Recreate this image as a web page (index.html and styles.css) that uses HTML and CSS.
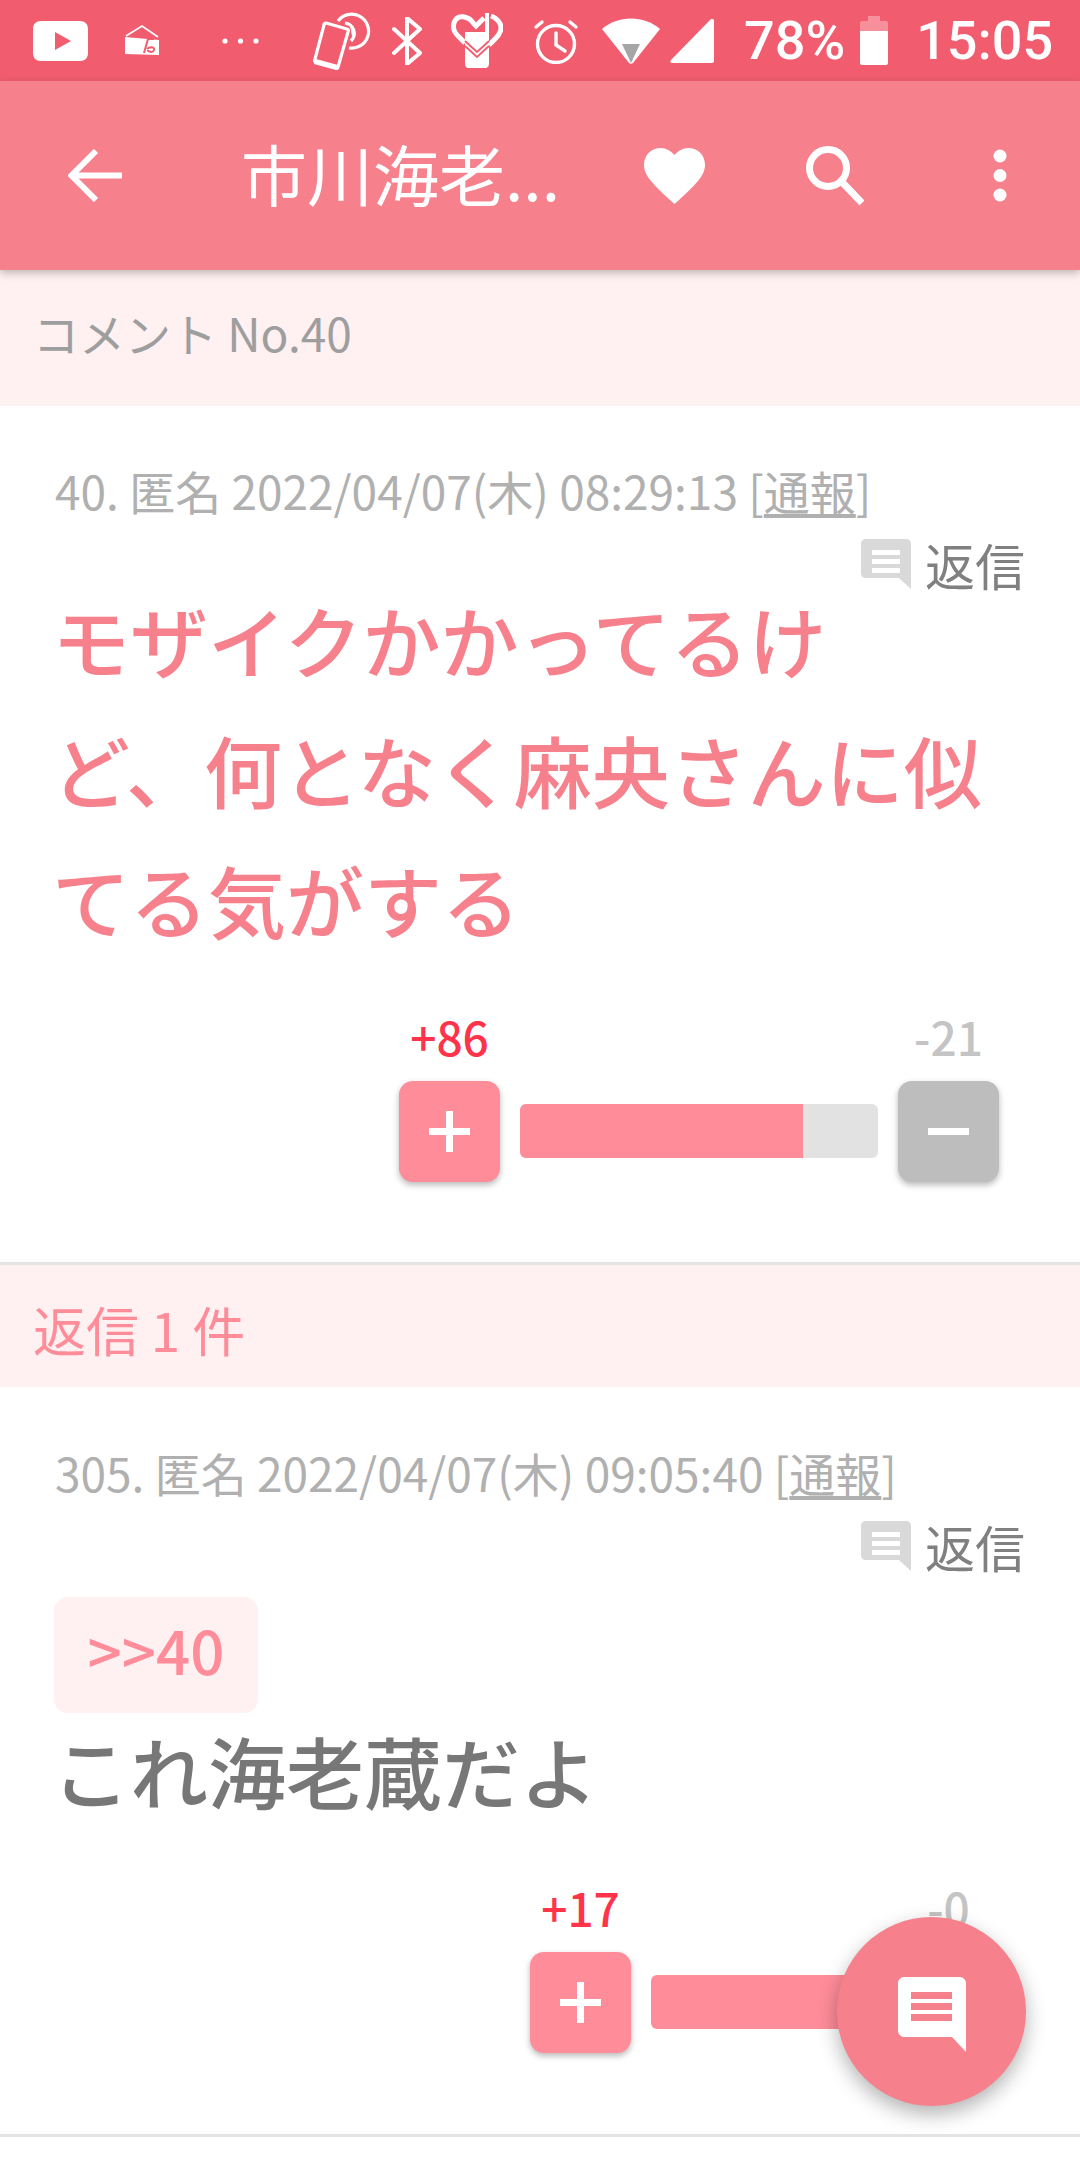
FILE: index.html
```html
<!DOCTYPE html>
<html lang="ja">
<head>
    <meta charset="UTF-8">
    <meta name="viewport" content="width=device-width, initial-scale=1.0">
    <title>コメント No.40</title>
    <link rel="stylesheet" href="styles.css">
</head>
<body>
    <div class="screen">
        <div class="status-bar">
            <svg class="st-youtube" viewBox="0 0 55 40"><path fill="#fff" fill-rule="evenodd" d="M8 0h39c5 0 8 3 8 8v24c0 5-3 8-8 8H8c-5 0-8-3-8-8V8c0-5 3-8 8-8zm14 11v18l16-9z"/></svg>
            <svg class="st-mail" viewBox="0 0 34 32"><path fill="none" stroke="#fff" stroke-width="1.6" d="M1 11 17 1l16 11"/><path fill="#fff" d="M0 12l34 3v15l-34-1z"/><path fill="none" stroke="#f15d6e" stroke-width="2" d="M19 28l4-14h6M22 24c3-3 8-2 7 1s-6 2-6 0"/></svg>
            <svg class="st-dots" viewBox="0 0 37 8"><circle cx="3" cy="4" r="2.6" fill="#fff"/><circle cx="18.500" cy="4" r="2.600" fill="#fff"/><circle cx="34" cy="4" r="2.600" fill="#fff"/></svg>
            <svg class="st-nfc" viewBox="0 0 59 58"><g fill="none" stroke="#fff" stroke-width="3.200"><path stroke-linejoin="round" d="M13 11l21 6c1 0 2 1 1 3L25 55c0 1-1 2-2 1L3 50c-1 0-2-1-1-3L11 13c0-2 1-2 2-2z"/><path d="M25 9A17 17 0 1 1 36 36"/><path d="M32 11A10.500 10.500 0 0 1 38 29"/></g><path fill="#fff" d="M37 13a6 6 0 0 1 2 11z"/><path fill="#fff" d="M3 47l22 6-2 5L1 52z"/></svg>
            <svg class="st-bt" viewBox="0 0 30 48"><path fill="none" stroke="#fff" stroke-width="4" stroke-linecap="round" stroke-linejoin="round" d="M2 12l26 24-13 11V1l13 11L2 36"/></svg>
            <svg class="st-heart" viewBox="0 0 52 55"><g fill="none" stroke="#fff" stroke-width="5"><path d="M33 5 25 13l-2-2C18 3 6 0 3 10c-2 7 2 11 5 14l6 6"/><path d="M40 3c8 3 12 10 9 16-1 3-3 5-5 7l-6 6"/></g><path fill="#fff" d="M34 0h4v50c0 3-1 5-4 5H18c-3 0-4-2-4-5V19h20z"/><path fill="none" stroke="#f15d6e" stroke-width="1.800" d="M14 28l12 11 12-11M14 33l12 11 12-11"/></svg>
            <svg class="st-alarm" viewBox="0 0 46 46"><g fill="none" stroke="#fff" stroke-width="3.400" stroke-linecap="round"><circle cx="23" cy="26" r="18.500"/><path d="M23 15v12l9 6M3 9l6-5M43 9l-6-5"/></g></svg>
            <svg class="st-wifi" viewBox="0 0 58 46"><path fill="#fff" d="M0 11C16-3 42-3 58 11L31 45c-1 1-3 1-4 0z"/><path fill="#a6a6a6" d="M20 26h18l-9 19z"/></svg>
            <svg class="st-signal" viewBox="0 0 44 44"><path fill="#fff" d="M40 1c2-2 4-1 4 1v40c0 1-1 2-2 2H2c-2 0-2-2-1-3z"/></svg>
            <span class="st-percent">78%</span>
            <svg class="st-battery" viewBox="0 0 28 49"><path fill="#f8909c" d="M8 0h12v5h6c1 0 2 1 2 2v9H0V7c0-1 1-2 2-2h6z"/><path fill="#fff" d="M0 15h28v32c0 1-1 2-2 2H2c-1 0-2-1-2-2z"/></svg>
            <span class="st-time">15:05</span>
        </div>

        <div class="toolbar">
            <svg class="tb-back" viewBox="0 0 54 53"><path fill="none" stroke="#fff" stroke-width="6" d="M54 26.500H5M28 2 3.500 26.500 28 51"/></svg>
            <div class="tb-title">市川海老...</div>
            <svg class="tb-heart" viewBox="0 0 61 56"><path fill="#fff" d="M30.500 56 26 52C10 37 0 28 0 17 0 7 7 0 17 0c5 0 10 3 13.500 7C34 3 39 0 44 0c10 0 17 7 17 17 0 11-10 20-26 35z"/></svg>
            <svg class="tb-search" viewBox="0 0 58 59"><g fill="none" stroke="#fff" stroke-width="7"><circle cx="22" cy="22" r="18.500"/><path d="M35 35l21 22"/></g></svg>
            <svg class="tb-more" viewBox="0 0 14 53"><circle cx="7" cy="7" r="6.500" fill="#fff"/><circle cx="7" cy="26.500" r="6.500" fill="#fff"/><circle cx="7" cy="46" r="6.500" fill="#fff"/></svg>
        </div>

        <div class="section-head">コメント No.40</div>

        <div class="comment comment-main">
            <div class="meta">40. 匿名 2022/04/07(木) 08:29:13 [<u>通報</u>]</div>
            <div class="reply-row">
                <svg class="reply-icon" viewBox="0 0 50 50"><path fill="#d9d9d9" d="M5 0h40c3 0 5 2 5 5v45L38 39H5c-3 0-5-2-5-5V5c0-3 2-5 5-5z"/><path fill="#fff" d="M11 11h28v5H11zM11 20h28v5H11zM11 29h28v5H11z"/></svg>
                <span>返信</span>
            </div>
            <div class="body body-pink">モザイクかかってるけ<br>ど、何となく麻央さんに似<br>てる気がする</div>
            <div class="vote">
                <div class="vote-side">
                    <span class="count count-plus">+86</span>
                    <div class="vote-btn btn-plus"><span class="bar-h"></span><span class="bar-v"></span></div>
                </div>
                <div class="track" style="width:358px"><div class="fill" style="width:79%"></div></div>
                <div class="vote-side">
                    <span class="count count-minus">-21</span>
                    <div class="vote-btn btn-minus"><span class="bar-h"></span></div>
                </div>
            </div>
        </div>

        <div class="replies-head">返信 1 件</div>

        <div class="comment comment-reply">
            <div class="meta">305. 匿名 2022/04/07(木) 09:05:40 [<u>通報</u>]</div>
            <div class="reply-row">
                <svg class="reply-icon" viewBox="0 0 50 50"><path fill="#d9d9d9" d="M5 0h40c3 0 5 2 5 5v45L38 39H5c-3 0-5-2-5-5V5c0-3 2-5 5-5z"/><path fill="#fff" d="M11 11h28v5H11zM11 20h28v5H11zM11 29h28v5H11z"/></svg>
                <span>返信</span>
            </div>
            <div class="anchor">&gt;&gt;40</div>
            <div class="body body-gray">これ海老蔵だよ</div>
            <div class="vote">
                <div class="vote-side">
                    <span class="count count-plus">+17</span>
                    <div class="vote-btn btn-plus"><span class="bar-h"></span><span class="bar-v"></span></div>
                </div>
                <div class="track" style="width:227px"><div class="fill" style="width:100%"></div></div>
                <div class="vote-side">
                    <span class="count count-minus">-0</span>
                    <div class="vote-btn btn-minus"><span class="bar-h"></span></div>
                </div>
            </div>
        </div>

        <div class="fab">
            <svg class="fab-icon" viewBox="0 0 68 75"><path fill="#fff" fill-rule="evenodd" d="M6 0h56c3 0 6 3 6 6v69L54 60H6c-3 0-6-3-6-6V6c0-3 3-6 6-6zm7 15v7h41v-7zm0 11v7h41v-7zm0 11v7h41v-7z"/></svg>
        </div>
    </div>
</body>
</html>
```
FILE: styles.css
```css
* {
    box-sizing: border-box;
}
html, body {
    margin: 0;
    padding: 0;
    background-color: #fff;
}
.screen {
    position: relative;
    width: 1080px;
    height: 2160px;
    overflow: hidden;
    font-family: "Noto Sans CJK JP", "Noto Sans", sans-serif;
}

/* status bar */
.status-bar {
    display: flex;
    align-items: center;
    height: 81px;
    padding-left: 33px;
    background-color: #f15d6e;
    color: #fff;
    font-family: Roboto, sans-serif;
    font-size: 54px;
    font-weight: 500;
}
.status-bar svg {
    flex: none;
}
.st-youtube { width: 55px; height: 40px; }
.st-mail { width: 34px; height: 32px; margin-left: 37px; }
.st-dots { width: 37px; height: 8px; margin-left: 63px; }
.st-nfc { width: 59px; height: 58px; margin-left: 54px; }
.st-bt { width: 30px; height: 48px; margin-left: 20px; }
.st-heart { width: 52px; height: 55px; margin-left: 29px; }
.st-alarm { width: 46px; height: 46px; margin-left: 30px; }
.st-wifi { width: 58px; height: 46px; margin-left: 23px; }
.st-signal { width: 44px; height: 44px; margin-left: 10px; }
.st-percent { margin-left: 30px; }
.st-battery { width: 28px; height: 49px; margin-left: 15px; }
.st-time { margin-left: 28px; }

/* toolbar */
.toolbar {
    position: relative;
    z-index: 1;
    display: flex;
    align-items: center;
    height: 189px;
    padding-left: 68px;
    background-color: #f6808c;
    box-shadow: 0 3px 8px rgba(0, 0, 0, 0.25);
}
.toolbar svg {
    flex: none;
}
.tb-back { width: 54px; height: 53px; }
.tb-title {
    width: 522px;
    padding-left: 119px;
    padding-bottom: 8px;
    color: #fff;
    font-size: 66px;
    white-space: nowrap;
}
.tb-heart { width: 61px; height: 56px; }
.tb-search { width: 58px; height: 59px; margin-left: 101px; }
.tb-more { width: 14px; height: 53px; margin-left: 129px; }

/* section headers */
.section-head {
    display: flex;
    align-items: center;
    height: 136px;
    padding-left: 33px;
    padding-bottom: 12px;
    background-color: #fff0f1;
    color: #9e9e9e;
    font-size: 46px;
}
.replies-head {
    display: flex;
    align-items: center;
    height: 122px;
    padding-left: 33px;
    padding-top: 5px;
    background-color: #fff0f1;
    color: #ff8c99;
    font-size: 53px;
}

/* comments */
.comment {
    padding: 0 55px;
    background-color: #fff;
    border-bottom: 3px solid #e4e4e4;
}
.comment-main {
    height: 859px;
    padding-top: 54px;
}
.comment-reply {
    height: 750px;
    padding-top: 55px;
}
.meta {
    height: 60px;
    color: #b0b0b0;
    font-size: 46px;
    line-height: 60px;
    white-space: nowrap;
}
.meta u {
    text-underline-offset: 4px;
}
.reply-row {
    display: flex;
    justify-content: flex-end;
    align-items: center;
    gap: 14px;
    height: 70px;
    margin-top: 9px;
    color: #808080;
    font-size: 50px;
}
.reply-icon {
    width: 50px;
    height: 50px;
}
.body {
    margin-left: -3px;
    font-size: 78px;
    line-height: 130px;
    font-weight: 500;
    white-space: nowrap;
}
.body-pink {
    margin-top: -25px;
    color: #f6808c;
}
.body-gray {
    margin-top: -8px;
    color: #777;
}
.anchor {
    width: 204px;
    height: 116px;
    margin-top: 16px;
    margin-left: -1px;
    background-color: #fff0f1;
    border-radius: 14px;
    color: #ff8c99;
    font-size: 60px;
    font-weight: 500;
    line-height: 104px;
    text-align: center;
}

/* vote widget */
.vote {
    display: flex;
    justify-content: flex-end;
    align-items: flex-end;
    gap: 20px;
    padding-right: 26px;
    margin-top: 42px;
}
.comment-reply .vote {
    margin-top: 42px;
}
.vote-side {
    display: flex;
    flex-direction: column;
    align-items: center;
    gap: 15px;
    width: 101px;
}
.count {
    font-size: 46px;
    font-weight: 500;
    line-height: 60px;
    white-space: nowrap;
}
.count-plus {
    color: #ff334a;
}
.count-minus {
    color: #c4c4c4;
}
.vote-btn {
    position: relative;
    width: 101px;
    height: 101px;
    border-radius: 14px;
    box-shadow: 0 3px 6px rgba(0, 0, 0, 0.28);
}
.btn-plus {
    background-color: #ff8c99;
}
.btn-minus {
    background-color: #bdbdbd;
}
.bar-h, .bar-v {
    position: absolute;
    background-color: #fff;
}
.bar-h {
    left: 30px;
    top: 47px;
    width: 41px;
    height: 7px;
}
.bar-v {
    left: 47px;
    top: 30px;
    width: 7px;
    height: 41px;
}
.track {
    height: 54px;
    margin-bottom: 24px;
    overflow: hidden;
    background-color: #e2e2e2;
    border-radius: 6px;
}
.fill {
    height: 100%;
    background-color: #ff8c99;
}

/* floating button */
.fab {
    position: absolute;
    left: 837px;
    top: 1917px;
    display: flex;
    justify-content: center;
    align-items: center;
    width: 189px;
    height: 189px;
    border-radius: 50%;
    background-color: #f6808c;
    box-shadow: 0 8px 20px rgba(0, 0, 0, 0.3);
}
.fab-icon {
    width: 68px;
    height: 75px;
    margin-top: 6px;
}
```
